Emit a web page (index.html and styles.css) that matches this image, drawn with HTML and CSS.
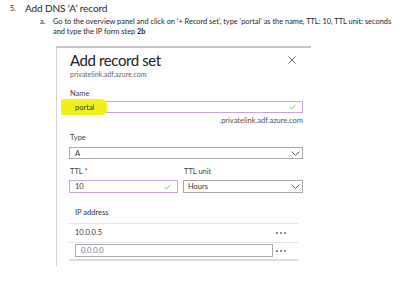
FILE: index.html
```html
<!DOCTYPE HTML>
<html>
    <head>
        <meta name="viewport" content="width=device-width, initial-scale=1.0">
        <title>Add DNS record</title>
        <link rel="stylesheet" href="styles.css">
    </head>
    <body>
        <div class="doc">
            <div class="step">
                <span class="num">5.</span>
                <span class="step-title">Add DNS ‘A’ record</span>
            </div>
            <div class="sub">
                <span class="num">a.</span>
                <p>Go to the overview panel and click on ‘+ Record set’, type ‘portal’ as the name, TTL: 10, TTL unit: seconds and type the IP form step <b>2b</b></p>
            </div>

            <div class="panel">
                <div class="panel-head">
                    <h2>Add record set</h2>
                    <svg class="close" width="8" height="8" viewBox="0 0 8 8">
                        <path d="M0.5 0.5 L7.5 7.5 M7.5 0.5 L0.5 7.5" stroke="#555" stroke-width="0.9" fill="none"/>
                    </svg>
                </div>
                <div class="subtitle">privatelink.adf.azure.com</div>

                <div class="label">Name</div>
                <div class="field valid name-field">
                    <span class="marker"></span>
                    <span class="value">portal</span>
                    <svg class="check" width="7" height="6" viewBox="0 0 7 6"><polyline points="0.5,3.2 2.5,5 6.5,0.8" stroke="#74c274" stroke-width="1" fill="none"/></svg>
                </div>
                <div class="suffix">.privatelink.adf.azure.com</div>

                <div class="label type-label">Type</div>
                <div class="field select">
                    <span class="value">A</span>
                    <svg class="chev" width="9" height="5" viewBox="0 0 9 5"><polyline points="0.5,0.5 4.5,4.5 8.5,0.5" stroke="#555" stroke-width="0.9" fill="none"/></svg>
                </div>

                <div class="ttl-grid">
                    <div class="label">TTL <span class="req">*</span></div>
                    <div class="label">TTL unit</div>
                    <div class="field valid ttl">
                        <span class="value">10</span>
                        <svg class="check" width="7" height="6" viewBox="0 0 7 6"><polyline points="0.5,3.2 2.5,5 6.5,0.8" stroke="#74c274" stroke-width="1" fill="none"/></svg>
                    </div>
                    <div class="field select ttl">
                        <span class="value">Hours</span>
                        <svg class="chev" width="9" height="5" viewBox="0 0 9 5"><polyline points="0.5,0.5 4.5,4.5 8.5,0.5" stroke="#555" stroke-width="0.9" fill="none"/></svg>
                    </div>
                </div>

                <div class="ip-table">
                    <div class="ip-head">IP address</div>
                    <div class="ip-row">
                        <span class="ip">10.0.0.5</span>
                        <span class="dots"><i></i><i></i><i></i></span>
                    </div>
                    <div class="ip-row last">
                        <div class="ip-input">0.0.0.0</div>
                        <span class="dots"><i></i><i></i><i></i></span>
                    </div>
                </div>
            </div>
        </div>
    </body>
</html>
```

FILE: styles.css
```css
body{
    margin: 0;
    background: #fff;
    color: #1e1e1e;
    font-family: Lato, "Open Sans", sans-serif;
}
.doc{
    width: 400px;
}
.step{
    display: flex;
    padding-left: 10px;
    margin-top: 1px;
    font-size: 10px;
    line-height: 14px;
    letter-spacing: -0.1px;
}
.step .num{
    width: 15px;
    font-size: 7px;
}
.sub{
    display: flex;
    padding-left: 40px;
    margin-top: 2px;
    font-size: 7.4px;
    line-height: 10px;
}
.sub .num{
    width: 13px;
}
.sub p{
    margin: 0;
    width: 340px;
}
.sub b{
    line-height: 9px;
}
.panel{
    margin: 9px 0 0 56px;
    width: 234px;
    padding: 3px 8px 5px 12px;
    border-top: 2px solid #c4c4c4;
    border-left: 1px solid #d2d2d2;
    color: #333;
}
.panel-head{
    display: flex;
    justify-content: space-between;
    align-items: center;
    padding-left: 1px;
}
.panel-head h2{
    margin: 0;
    font-size: 15px;
    font-weight: normal;
    line-height: 18px;
    letter-spacing: -0.4px;
    color: #222;
}
.close{
    margin-right: 7px;
}
.subtitle{
    padding-left: 1px;
    font-size: 7px;
    line-height: 10px;
    color: #666;
}
.label{
    padding-left: 1px;
    margin-top: 10px;
    font-size: 7.5px;
    line-height: 10px;
    color: #444;
}
.req{
    color: #c42b2b;
}
.field{
    position: relative;
    display: flex;
    align-items: center;
    justify-content: space-between;
    height: 12px;
    margin-top: 2px;
    padding: 0 6px 0 5px;
    box-sizing: border-box;
    border: 1px solid #a9a9a9;
    font-size: 7.5px;
    color: #333;
}
.field.valid{
    border-color: #c5a6d4;
}
.value{
    position: relative;
}
.marker{
    position: absolute;
    left: -9px;
    top: -3px;
    width: 46px;
    height: 16px;
    background: #f2f01c;
    border-radius: 3px 6px 5px 2px;
}
.suffix{
    margin-top: 3px;
    text-align: right;
    font-size: 7.5px;
    line-height: 10px;
    color: #555;
}
.label.type-label{
    margin-top: 7px;
}
.select{
    margin-top: 4px;
    padding-right: 2px;
}
.ttl-grid{
    display: grid;
    grid-template-columns: 109px 1fr;
    column-gap: 5px;
    margin-top: 8px;
}
.ttl-grid .label{
    margin-top: 0;
}
.field.ttl{
    height: 13px;
    margin-top: 3px;
}
.select.ttl{
    padding-left: 4px;
}
.ip-table{
    margin: 15px 5px 0 0;
    font-size: 7.5px;
    color: #333;
}
.ip-head{
    padding: 0 0 5px 6px;
    line-height: 10px;
    border-bottom: 1px solid #e4e4e4;
}
.ip-row{
    display: grid;
    grid-template-columns: 198px 1fr;
    align-items: center;
    padding: 4px 0 4px 6px;
    line-height: 10px;
    border-bottom: 1px solid #e4e4e4;
}
.ip-row.last{
    padding: 1px 0 2px 6px;
    border-bottom: 2px solid #dcdcdc;
}
.ip-input{
    height: 13px;
    box-sizing: border-box;
    padding-left: 5px;
    border: 1px solid #a9a9a9;
    line-height: 11px;
    color: #777;
}
.dots{
    display: flex;
    gap: 2px;
    margin-left: 3px;
}
.dots i{
    width: 2px;
    height: 2px;
    border-radius: 50%;
    background: #666;
}
```
